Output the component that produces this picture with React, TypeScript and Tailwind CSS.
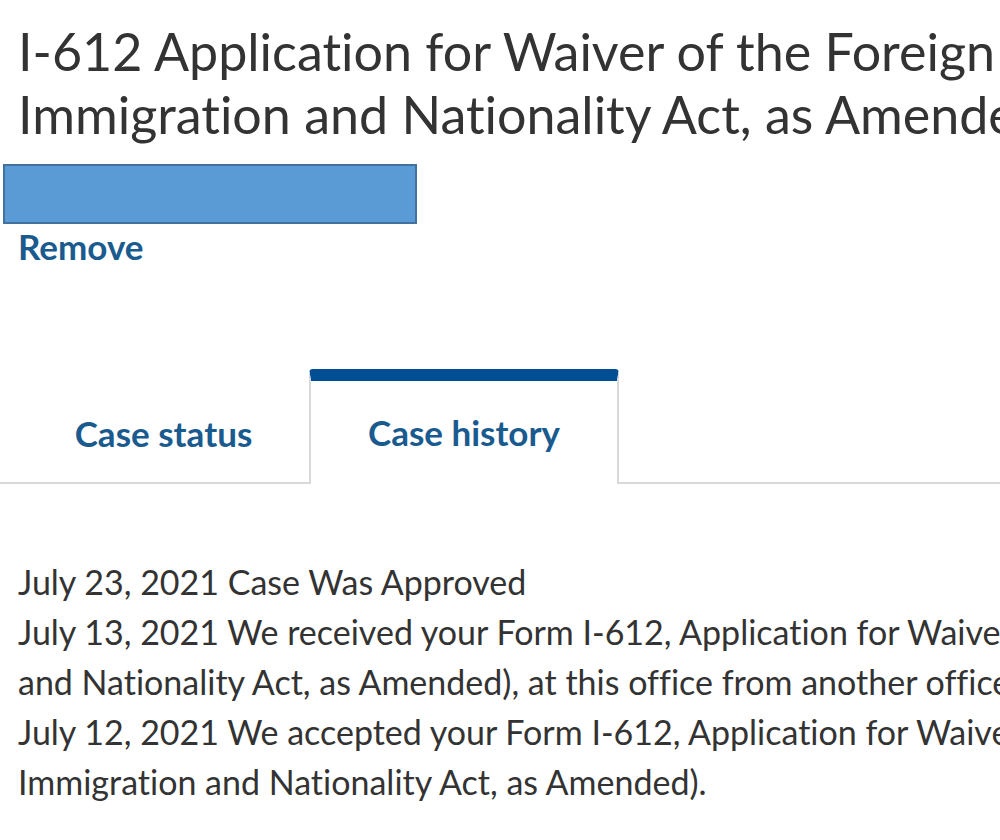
import React from "react";

const font = { fontFamily: "Lato, 'Noto Sans', sans-serif" };

export default function App() {
  return (
    <div
      className="w-[1000px] h-[840px] overflow-hidden bg-white text-[#333333] [font-variant-ligatures:none]"
      style={font}
    >
      <div className="pl-[18px] pt-[20px]">
        <h1 className="text-[52px] leading-[63px] font-normal whitespace-nowrap">
          <div>I-612 Application for Waiver of the Foreign Residence Requirement (under Section 212(e) of the</div>
          <div>Immigration and Nationality Act, as Amended)</div>
        </h1>
      </div>
      <div className="mt-[18px] ml-[3px] w-[414px] h-[60px] bg-[#5b9bd5] border-2 border-[#41719c]" />
      <div className="pl-[18px] mt-[2px]">
        <span className="text-[35px] leading-[40px] font-bold text-[#1a5b8f]">Remove</span>
      </div>
      <div className="mt-[103px] flex items-end border-b-2 border-[#d9d9d9] pl-[18px]">
        <div className="w-[291px] h-[101px] flex items-center justify-center -mb-[2px]">
          <span className="text-[35px] font-bold text-[#1a5b8f]">Case status</span>
        </div>
        <div className="w-[310px] h-[115px] -mb-[2px] bg-white border-x-2 border-[#d9d9d9] border-t-[12px] border-t-[#004f94] rounded-t-[4px] flex items-center justify-center">
          <span className="text-[35px] font-bold text-[#1a5b8f]">Case history</span>
        </div>
      </div>
      <div className="pl-[18px] pt-[73px] text-[34px] leading-[50px] whitespace-nowrap">
        <div>July 23, 2021 Case Was Approved</div>
        <div>July 13, 2021 We received your Form I-612, Application for Waiver of the Foreign Residence Requirement (under Section 212(e) of the Immigration</div>
        <div>and Nationality Act, as Amended), at this office from another office.</div>
        <div>July 12, 2021 We accepted your Form I-612, Application for Waiver of the Foreign Residence Requirement (under Section 212(e) of the</div>
        <div>Immigration and Nationality Act, as Amended).</div>
      </div>
    </div>
  );
}
